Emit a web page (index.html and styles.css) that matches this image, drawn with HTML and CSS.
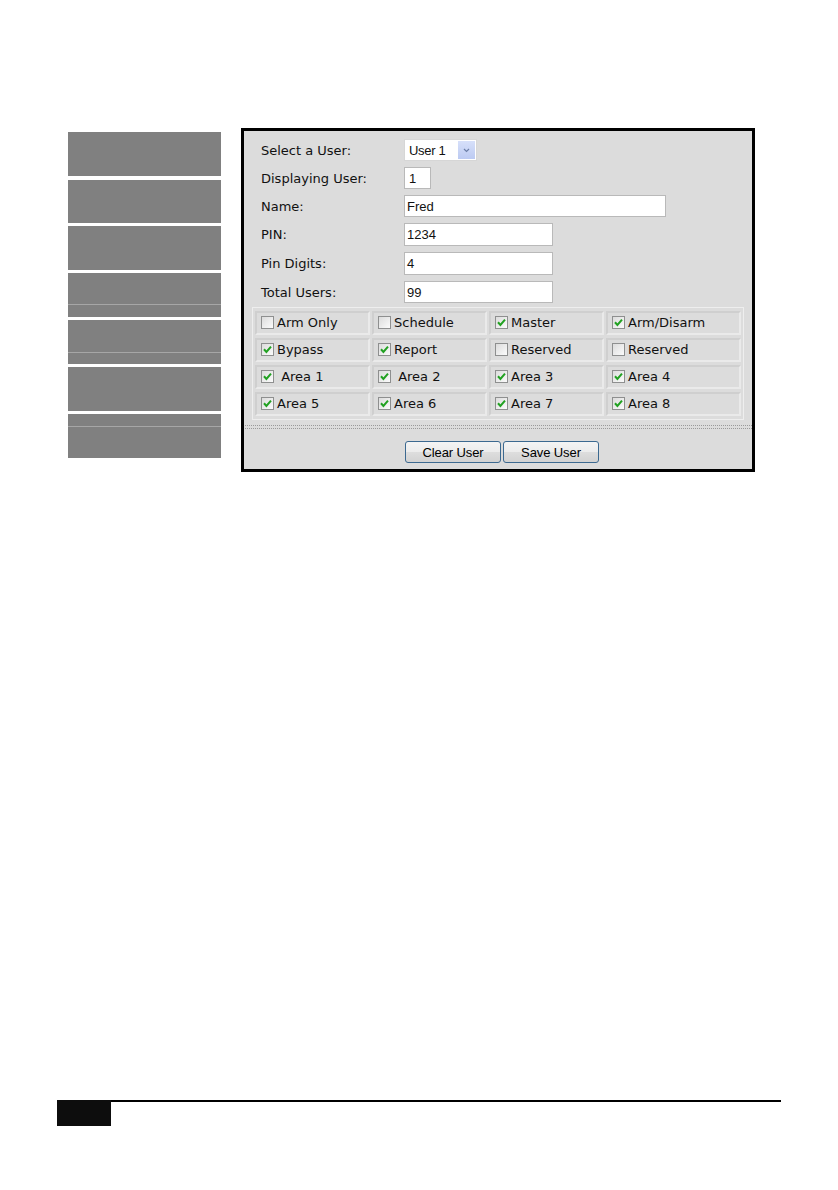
FILE: index.html
```html
<!DOCTYPE html>
<html lang="en">
<head>
    <meta charset="UTF-8">
    <meta name="viewport" content="width=device-width, initial-scale=1.0">
    <title>User Settings</title>
<link rel="stylesheet" href="styles.css">
</head>
<body>
<div class="page">
    <div class="content">
        <!-- Left menu (greyed out) -->
        <div class="sidemenu">
            <div class="menuitem first"></div>
            <div class="menuitem short"></div>
            <div class="menuitem"></div>
            <div class="menuitem"><div class="subline sub31"></div></div>
            <div class="menuitem"><div class="subline sub32"></div></div>
            <div class="menuitem"></div>
            <div class="menuitem"><div class="subline sub12"></div></div>
        </div>

        <div class="panel">
            <div class="form">
                <div class="row">
                    <label>Select a User:</label>
                    <div class="select">
                        <span class="selvalue">User 1</span>
                        <span class="selbtn">
                            <svg width="7" height="5" viewBox="0 0 7 5"><path d="M1 1 L3.5 3.5 L6 1" fill="none" stroke="#6d7fa8" stroke-width="1.2"/></svg>
                        </span>
                    </div>
                </div>
                <div class="row">
                    <label>Displaying User:</label>
                    <div class="input tiny">1</div>
                </div>
                <div class="row">
                    <label>Name:</label>
                    <div class="input wide">Fred</div>
                </div>
                <div class="row tall">
                    <label>PIN:</label>
                    <div class="input mid">1234</div>
                </div>
                <div class="row tall">
                    <label>Pin Digits:</label>
                    <div class="input mid">4</div>
                </div>
                <div class="row">
                    <label>Total Users:</label>
                    <div class="input mid">99</div>
                </div>
            </div>

            <table class="perms">
                <tr>
                    <td><span class="cb"></span>Arm Only</td>
                    <td><span class="cb"></span>Schedule</td>
                    <td><span class="cb on"></span>Master</td>
                    <td class="last"><span class="cb on"></span>Arm/Disarm</td>
                </tr>
                <tr>
                    <td><span class="cb on"></span>Bypass</td>
                    <td><span class="cb on"></span>Report</td>
                    <td><span class="cb"></span>Reserved</td>
                    <td class="last"><span class="cb"></span>Reserved</td>
                </tr>
                <tr>
                    <td><span class="cb on"></span>&nbsp;Area 1</td>
                    <td><span class="cb on"></span>&nbsp;Area 2</td>
                    <td><span class="cb on"></span>Area 3</td>
                    <td class="last"><span class="cb on"></span>Area 4</td>
                </tr>
                <tr>
                    <td><span class="cb on"></span>Area 5</td>
                    <td><span class="cb on"></span>Area 6</td>
                    <td><span class="cb on"></span>Area 7</td>
                    <td class="last"><span class="cb on"></span>Area 8</td>
                </tr>
            </table>

            <div class="dots"></div>

            <div class="buttons">
                <button class="btn">Clear User</button>
                <button class="btn">Save User</button>
            </div>
        </div>
    </div>

    <!-- page footer -->
    <div class="footer">
        <div class="pagebox"></div>
        <div class="footline"></div>
    </div>
</div>
</body>
</html>
```

FILE: styles.css
```css
body {
  margin: 0;
  background: #fff;
  font-family: "DejaVu Sans", Verdana, sans-serif;
  font-size: 13px;
  color: #111;
}

.page {
  width: 838px;
  height: 1190px;
  padding-top: 128px;
  box-sizing: border-box;
}

.content {
  display: flex;
  align-items: flex-start;
}

/* side menu */
.sidemenu {
  display: flex;
  flex-direction: column;
  gap: 3px;
  width: 153px;
  margin-left: 68px;
  margin-top: 4px;
}
.menuitem {
  position: relative;
  height: 44px;
  background: #808080;
}
.menuitem.first {
  height: 44px;
  margin-bottom: 1px;
}
.menuitem.short {
  height: 43px;
}
.subline {
  position: absolute;
  left: 0;
  right: 0;
  height: 1px;
  background: #a6a6a6;
}
.sub31 { top: 31px; }
.sub32 { top: 32px; }
.sub12 { top: 12px; }

/* main panel */
.panel {
  width: 514px;
  height: 344px;
  margin-left: 20px;
  border: 3px solid #000;
  box-sizing: border-box;
  background: #dcdcdc;
  padding: 8px 0 0 8px;
}

.form {
  display: flex;
  flex-direction: column;
  gap: 6px;
  padding-left: 9px;
}
.row {
  display: flex;
  align-items: center;
  height: 22px;
}
.row.tall {
  height: 23px;
}
.row label {
  width: 143px;
  flex: none;
}

.input, .select {
  box-sizing: border-box;
  height: 100%;
  background: #fff;
  border: 1px solid #b9b9b9;
  font-family: "Liberation Sans", Arial, sans-serif;
  font-size: 13px;
  line-height: 20px;
  padding: 1px 0 0 2px;
}
.input.tiny { width: 27px; padding-left: 4px; }
.input.wide { width: 262px; }
.input.mid { width: 149px; }

.select {
  width: 73px;
  display: flex;
  padding: 0 1px 0 4px;
  border-color: #d6d6d6;
}
.selvalue {
  flex: 1;
  padding-top: 1px;
  letter-spacing: -0.3px;
}
.selbtn {
  width: 17px;
  margin: 1px 0;
  background: linear-gradient(#d7e0fa, #bccaf2);
  display: flex;
  align-items: center;
  justify-content: center;
}

/* checkbox grid */
.perms {
  margin-top: 4px;
  border-collapse: separate;
  border-spacing: 2px 3px;
  border: 1px solid #eeeeee;
  padding: 0;
}
.perms td {
  box-sizing: border-box;
  width: 115px;
  height: 24px;
  padding: 0 0 0 4px;
  border: 2px solid #eaeaea;
  border-top-color: #cfcfcf;
  border-left-color: #cfcfcf;
  white-space: nowrap;
  vertical-align: middle;
  line-height: 20px;
}
.perms td.last {
  width: 135px;
}

.cb {
  display: inline-block;
  width: 13px;
  height: 13px;
  box-sizing: border-box;
  border: 1px solid #8e8f8f;
  background: linear-gradient(135deg, #dcdcdc, #fbfbfb);
  vertical-align: -2px;
  margin-right: 3px;
}
.cb.on {
  background:
    url("data:image/svg+xml,%3Csvg xmlns='http://www.w3.org/2000/svg' width='11' height='11' viewBox='0 0 11 11'%3E%3Cpath d='M2 5.3 L4.4 7.9 L9 2.6' fill='none' stroke='%2321a121' stroke-width='2'/%3E%3C/svg%3E") center / 11px 11px no-repeat,
    linear-gradient(135deg, #dcdcdc, #fbfbfb);
}

.dots {
  height: 2px;
  margin: 5px 0 0 -7px;
  border-top: 1px dotted #9a9a9a;
  border-bottom: 1px dotted #9a9a9a;
}

.buttons {
  display: flex;
  gap: 2px;
  margin-top: 12px;
  padding-left: 153px;
}
.btn {
  width: 96px;
  height: 22px;
  border: 1px solid #3c6990;
  border-radius: 3px;
  background: linear-gradient(#f4f4f4 0%, #ececec 48%, #dddddd 52%, #d2d2d2 100%);
  font-family: "Liberation Sans", Arial, sans-serif;
  font-size: 13px;
  color: #000;
  padding: 0;
  letter-spacing: -0.1px;
}

/* footer */
.footer {
  display: flex;
  align-items: flex-start;
  margin-top: 628px;
  padding-left: 57px;
}
.pagebox {
  width: 54px;
  height: 26px;
  background: #0d0d0d;
}
.footline {
  width: 670px;
  height: 2px;
  background: #000;
}
```
